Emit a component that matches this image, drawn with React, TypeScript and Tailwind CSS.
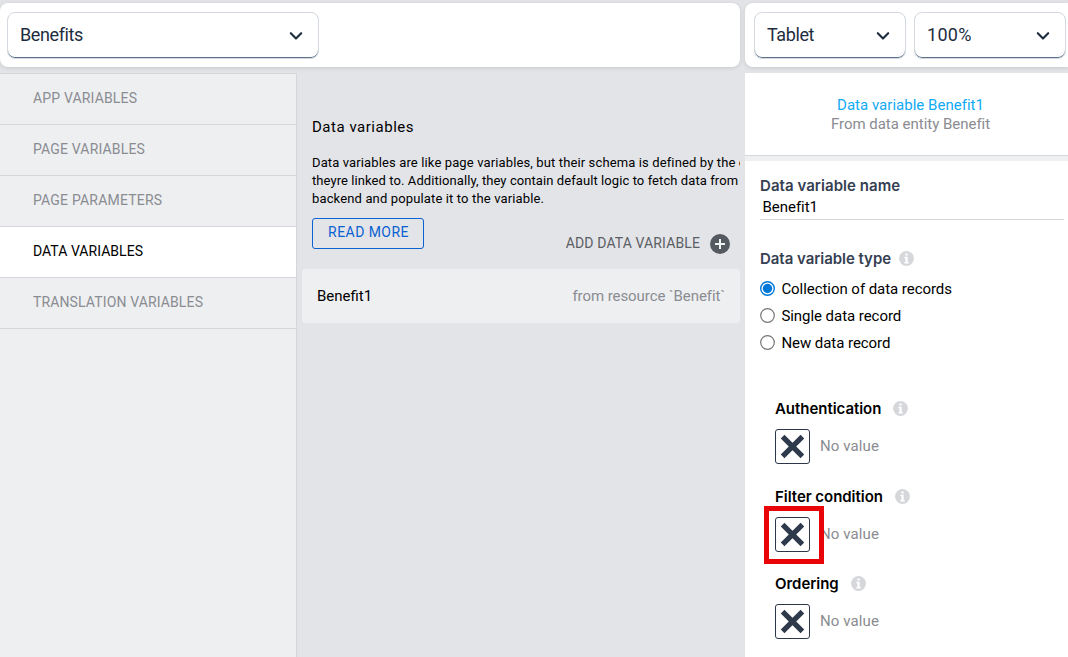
import type { ReactNode } from "react";

const sidebarItems = [
  { label: "APP VARIABLES", tracking: "tracking-[0.16px]" },
  { label: "PAGE VARIABLES", tracking: "tracking-[0.17px]" },
  { label: "PAGE PARAMETERS", tracking: "tracking-[0.2px]" },
  { label: "DATA VARIABLES", tracking: "tracking-[0.04px]", active: true },
  { label: "TRANSLATION VARIABLES", tracking: "tracking-[0.13px]" },
];

const recordTypes = ["Collection of data records", "Single data record", "New data record"];

function Select({ label, className, textClass }: { label: string; className: string; textClass: string }) {
  return (
    <button
      className={`flex h-[47px] shrink-0 items-center justify-between rounded-lg border border-[#d3d9de] bg-white pr-[14px] pl-3 text-[18px] leading-[22px] text-[#1d2d3e] shadow-[inset_0_-1px_0_#5b738b] ${className}`}
    >
      <span className={`-mt-0.5 ${textClass}`}>{label}</span>
      <svg width="16" height="12" viewBox="0 0 16 12" fill="none" className="mt-px">
        <path d="M2.8 3.2 8 8.6l5.2-5.4" stroke="#1d2d3e" strokeWidth="2.1" strokeLinecap="round" strokeLinejoin="round" />
      </svg>
    </button>
  );
}

function InfoIcon({ className }: { className: string }) {
  return (
    <svg width="15" height="15" viewBox="0 0 15 15" className={`shrink-0 ${className}`}>
      <circle cx="7.5" cy="7.5" r="7.4" fill="#d5d7db" />
      <path d="M6.4 2.4h2.3v2.2H6.4zM5.4 5.8h3.3v5.2h1v1.4H5.4V11h1V7.2h-1z" fill="#fff" />
    </svg>
  );
}

function Field({ label, className, children }: { label: string; className: string; children?: ReactNode }) {
  return (
    <section className={`h-[62px] ${className}`}>
      <div className="flex h-5 items-center">
        <h3 className="font-[Inter,sans-serif] text-[15px] leading-5 font-semibold tracking-[-0.04px] text-black">
          {label}
        </h3>
        <InfoIcon className="-mt-px ml-3" />
      </div>
      <div className="mt-[10px] flex">
        <button className="relative flex size-[35px] items-center justify-center rounded-[3px] border border-[#2c3849] bg-white">
          <svg width="25" height="25" viewBox="0 0 25 25">
            <path
              d="M2.6 2.6 22.4 22.4M22.4 2.6 2.6 22.4"
              stroke="#2e3a4b"
              strokeWidth="5.2"
            />
          </svg>
          {children}
        </button>
        <span className="mt-[7px] ml-[10px] text-[15px] leading-5 tracking-[0.1px] text-[#8a8c91]">No value</span>
      </div>
    </section>
  );
}

export default function App() {
  return (
    <div className="flex h-[657px] w-[1068px] flex-col overflow-hidden bg-[#e3e4e8] pt-[3px] font-[Roboto,sans-serif] text-black">
      <header className="flex h-[70px] shrink-0 items-start gap-[5px]">
        <div className="flex h-16 w-[740px] rounded-lg bg-white pt-[9px] pl-[7px] shadow-[0_1px_4px_rgba(0,0,0,0.12)]">
          <Select label="Benefits" className="w-[312px]" textClass="tracking-[-0.4px]" />
        </div>
        <div className="flex h-16 w-[323px] gap-2 rounded-l-lg bg-white pt-[9px] pl-[9px] shadow-[0_1px_4px_rgba(0,0,0,0.12)]">
          <Select label="Tablet" className="w-[152px]" textClass="tracking-[-0.4px]" />
          <Select label="100%" className="w-[152px]" textClass="tracking-[0.3px]" />
        </div>
      </header>

      <div className="flex min-h-0 flex-1">
        <nav className="w-[297px] shrink-0 border-t border-r border-[#d5d6da] bg-[#eeeff1]">
          {sidebarItems.map((item) => (
            <a
              key={item.label}
              className={`flex h-[51px] items-center border-b border-[#d5d6da] pl-[33px] text-[14px] leading-5 ${item.tracking} ${item.active ? "bg-white text-black" : "text-[#8a8c91]"}`}
            >
              <span className="-mt-[3px]">{item.label}</span>
            </a>
          ))}
        </nav>

        <main className="w-[443px] shrink-0 overflow-hidden pl-[5px]">
          <div className="h-[196px] pt-11 pl-[10px]">
            <h2 className="text-[15px] leading-5 tracking-[0.52px]">Data variables</h2>
            <p className="mt-[17px] text-[13px] leading-[18px] whitespace-nowrap">
              <span className="block tracking-[0.126px]">
                Data variables are like page variables, but their schema is defined by the entity
              </span>
              <span className="block tracking-[0.08px]">
                theyre linked to. Additionally, they contain default logic to fetch data from
              </span>
              <span className="block tracking-[0.14px]">backend and populate it to the variable.</span>
            </p>
            <div className="mt-[10px] flex items-start justify-between pr-[10px]">
              <button className="flex h-[31px] w-28 justify-center rounded-[3px] border border-[#0a61d1] pt-[3px] pl-px text-[14px] leading-5 tracking-[0.45px] text-[#0a61d1]">
                READ MORE
              </button>
              <button className="mt-4 flex items-center gap-[10px] text-[14px] leading-5 tracking-[0.12px] text-[#5b5e64]">
                <span className="-mt-0.5">ADD DATA VARIABLE</span>
                <svg width="20" height="20" viewBox="0 0 20 20">
                  <circle cx="10" cy="10" r="10" fill="#555a61" />
                  <path d="M10 5v10M5 10h10" stroke="#f1f2f4" strokeWidth="2" />
                </svg>
              </button>
            </div>
          </div>
          <div className="flex h-[54px] items-center justify-between rounded-[3px] bg-[#eeeff1] pr-[15px] pl-[15px] text-[15px] leading-5">
            <span>Benefit1</span>
            <span className="tracking-[-0.067px] text-[#8a8c91]">from resource `Benefit`</span>
          </div>
        </main>

        <aside className="ml-[5px] flex w-[323px] shrink-0 flex-col bg-white">
          <div className="h-[83px] shrink-0 border-b border-[#d5d8da] pt-[23px] pl-2 text-center text-[15px] leading-[19px]">
            <div className="tracking-[0.02px] text-[#11aaf5]">Data variable Benefit1</div>
            <div className="tracking-[-0.02px] text-[#8a8c91]">From data entity Benefit</div>
          </div>
          <div className="h-[5px] shrink-0 bg-[#eff0f1]" />
          <div className="pt-[15px] pl-[15px]">
            <h3 className="font-[Inter,sans-serif] text-[15px] leading-5 font-semibold tracking-[0.05px] text-[#354052]">
              Data variable name
            </h3>
            <div className="mr-1 h-6 border-b border-[#d5d6da] pt-px pl-[2.5px] text-[15px] leading-5 tracking-[-0.03px]">
              Benefit1
            </div>
            <div className="mt-[29px] flex h-5 items-center">
              <h3 className="font-[Inter,sans-serif] text-[15px] leading-5 font-semibold tracking-[-0.04px] text-[#354052]">
                Data variable type
              </h3>
              <InfoIcon className="-mt-px ml-2" />
            </div>
            <div className="mt-1.5">
              {recordTypes.map((type, i) => (
                <label key={type} className="flex h-[27px] items-center text-[15px] leading-5 tracking-[-0.05px]">
                  <svg width="15" height="15" viewBox="0 0 15 15" className="mr-[6.4px]">
                    <circle
                      cx="7.5"
                      cy="7.5"
                      r="6.8"
                      fill="#fff"
                      stroke={i === 0 ? "#0078d7" : "#767676"}
                      strokeWidth={i === 0 ? 1.4 : 1.2}
                    />
                    {i === 0 && <circle cx="7.5" cy="7.5" r="4.7" fill="#0078d7" />}
                  </svg>
                  {type}
                </label>
              ))}
            </div>
            <div className="pt-[43px] pl-[15px]">
              <Field label="Authentication" className="" />
              <Field label="Filter condition" className="mt-[26px]">
                <span className="absolute -top-3 -left-3 h-[58px] w-[60px] border-[5px] border-[#e90408]" />
              </Field>
              <Field label="Ordering" className="mt-[25px]" />
            </div>
          </div>
        </aside>
      </div>
    </div>
  );
}
